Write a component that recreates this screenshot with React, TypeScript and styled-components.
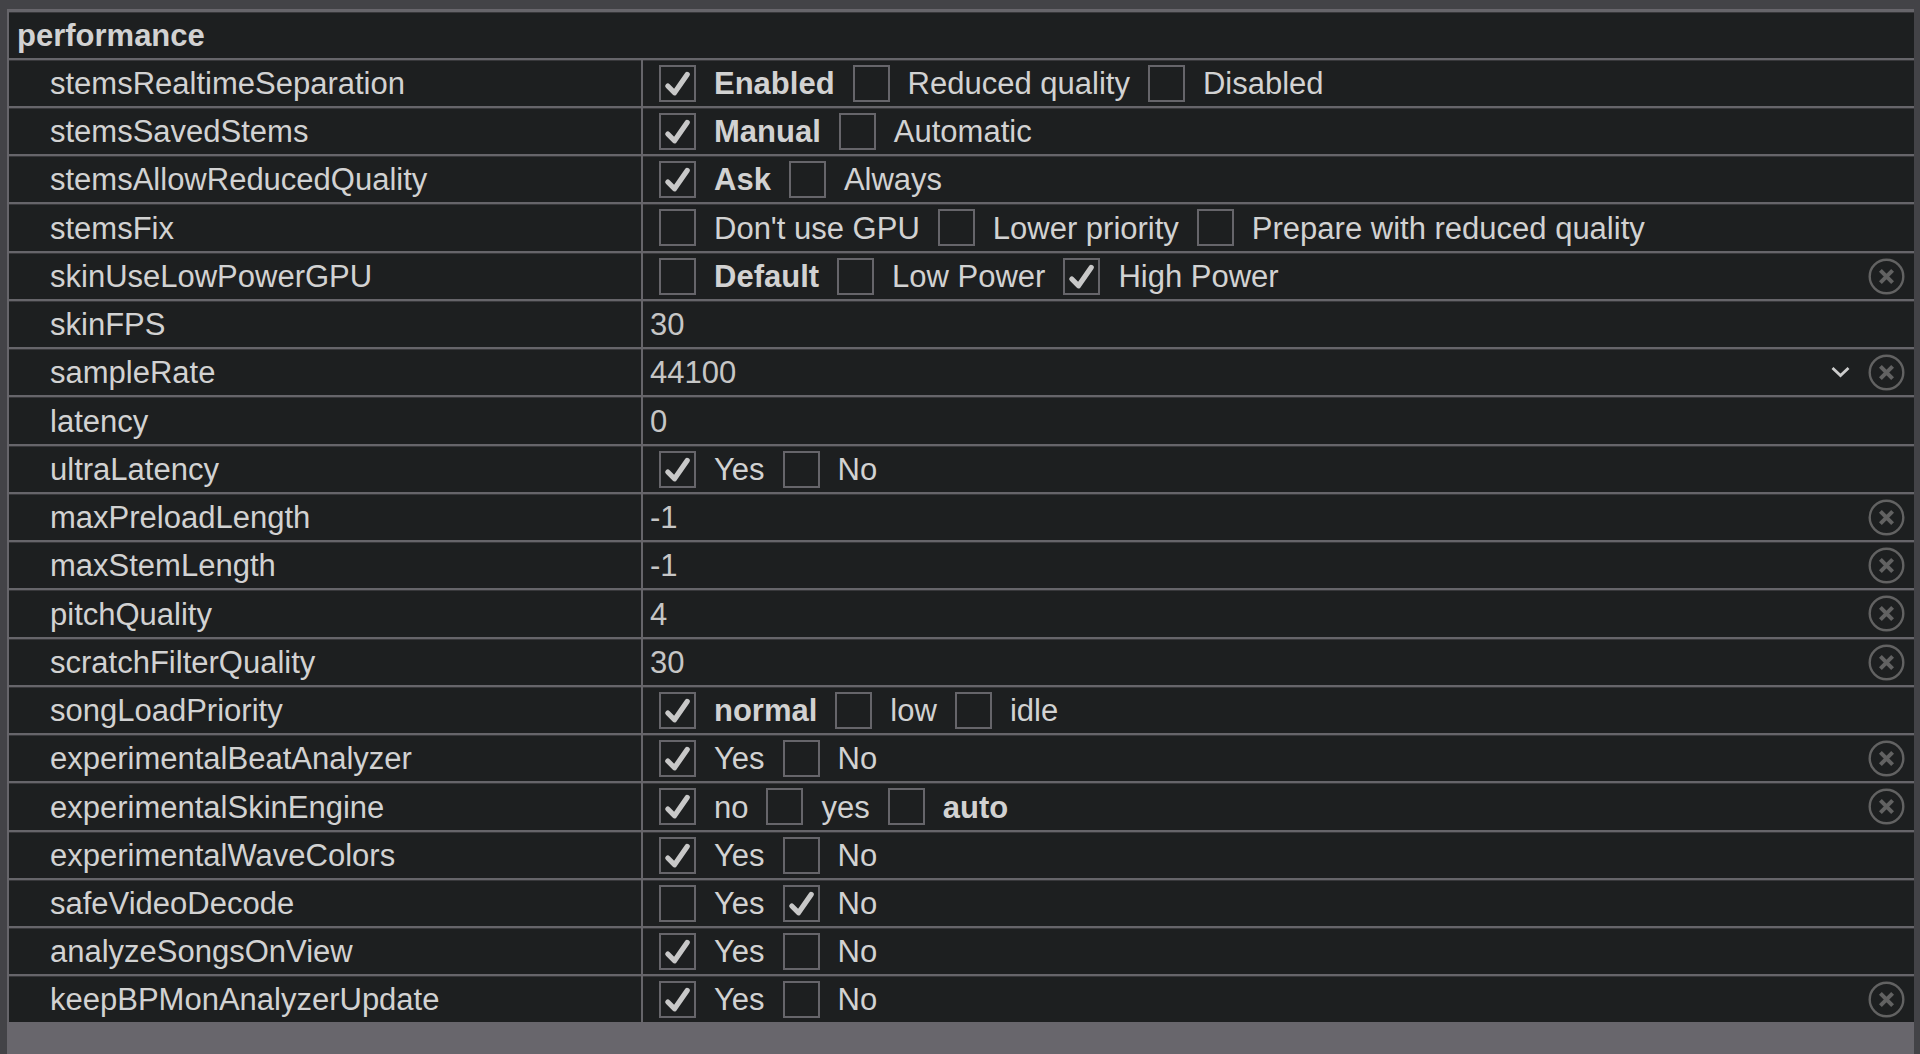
import React, { useState } from "react";
import styled, { createGlobalStyle } from "styled-components";

const colors = {
  frame: "#434347",
  line: "#66656a",
  lineShade: "#38383b",
  filler: "#68666c",
  row: "#1d1f20",
  text: "#d2d2d2",
  value: "#c6c6c6",
  reset: "#626262",
};

const GlobalStyle = createGlobalStyle`
  *, *::before, *::after { box-sizing: border-box; }
  body {
    margin: 0;
    background: ${colors.frame};
    color: ${colors.text};
    font: 31px/36px "Liberation Sans", Arial, sans-serif;
  }
`;

const Page = styled.main`
  display: flex;
  min-height: 100vh;
  padding: 9px 6px 0 7px;
`;

const Panel = styled.form`
  flex: 1;
  min-width: 0;
  padding-top: 1px;
  background: ${colors.filler};
`;

const OptionsTable = styled.table`
  width: 100%;
  table-layout: fixed;
  border-collapse: separate;
  border-spacing: 0;
`;

const NameColumn = styled.col`
  width: 634px;
`;

const Row = styled.tr`
  height: 48px;

  &:nth-child(4n + 5):not(:last-child) {
    height: 49px;
  }
`;

const Cell = styled.td`
  padding: 0;
  border-top: 2px solid ${colors.line};
  border-left: 2px solid ${colors.line};
  background: ${colors.row};
  box-shadow: inset 0 1px ${colors.lineShade};
`;

const GroupHeading = styled(Cell).attrs({ as: "th" })`
  padding: 2px 0 0 8px;
  font-weight: 700;
  text-align: left;
`;

const NameCell = styled(Cell).attrs({ as: "th" })`
  padding: 2px 0 0 41px;
  font-weight: 400;
  text-align: left;
`;

const CellContent = styled.div`
  display: flex;
  align-items: center;
  gap: 18px;
  padding-right: 9px;
`;

const Choices = styled.div`
  display: flex;
  flex: 1;
  align-items: center;
  gap: 18px;
  padding-left: 16px;
`;

const Choice = styled.label<{ $bold?: boolean }>`
  display: flex;
  align-items: center;
  gap: 18px;
  font-weight: ${(p) => (p.$bold ? 700 : 400)};
  white-space: nowrap;
`;

const ChoiceText = styled.span`
  padding-top: 2px;
`;

const Box = styled.span`
  display: grid;
  width: 37px;
  height: 37px;

  & > * {
    grid-area: 1 / 1;
  }
`;

const Tick = styled.input`
  appearance: none;
  width: 37px;
  height: 37px;
  margin: 0;
  border: 2px solid ${colors.line};

  & + svg {
    visibility: hidden;
    pointer-events: none;
  }

  &:checked + svg {
    visibility: visible;
  }
`;

const ValueInput = styled.input`
  flex: 1;
  min-width: 0;
  height: 38px;
  padding: 2px 0 0 7px;
  border: 0;
  outline: 0;
  background: transparent;
  color: ${colors.value};
  font: inherit;
`;

const SelectBox = styled.div`
  display: grid;
  flex: 1;
  align-items: center;

  & > * {
    grid-area: 1 / 1;
  }

  & > svg {
    justify-self: end;
    pointer-events: none;
  }
`;

const ValueSelect = styled.select`
  appearance: none;
  height: 38px;
  padding: 2px 0 0 7px;
  border: 0;
  outline: 0;
  background: transparent;
  color: ${colors.value};
  font: inherit;
`;

const ResetButton = styled.button`
  display: grid;
  width: 37px;
  height: 37px;
  padding: 0;
  border: 0;
  background: transparent;
  color: ${colors.reset};
  cursor: pointer;
`;

const CheckIcon = () => (
  <svg width="37" height="37" viewBox="0 0 37 37" fill="none" aria-hidden="true">
    <path d="M8.8 21L15.5 27.8L28.2 9.4" stroke="#c8c8c8" strokeWidth="5.2" strokeLinecap="round" strokeLinejoin="round" />
  </svg>
);

const ChevronIcon = () => (
  <svg width="19" height="12" viewBox="0 0 19 12" fill="none" aria-hidden="true">
    <path d="M1.5 2L9.5 9.5L17.5 2" stroke="#cccccc" strokeWidth="2.8" />
  </svg>
);

const ResetIcon = () => (
  <svg width="37" height="37" viewBox="0 0 37 37" fill="none" stroke="currentColor" aria-hidden="true">
    <circle cx="18.5" cy="18.5" r="16.8" strokeWidth="2.4" />
    <path d="M12.4 12.4L24.6 24.6M24.6 12.4L12.4 24.6" strokeWidth="4" />
  </svg>
);

type Option = {
  name: string;
  resettable?: boolean;
} & (
  | { kind: "choice"; choices: string[]; selected: number; standard?: number }
  | { kind: "flags"; choices: string[] }
  | { kind: "number"; value: string }
  | { kind: "list"; value: string; values: string[] }
);

const yesNo = (name: string, selected: number, resettable = false): Option => ({
  name,
  kind: "choice",
  choices: ["Yes", "No"],
  selected,
  resettable,
});

const options: Option[] = [
  { name: "stemsRealtimeSeparation", kind: "choice", choices: ["Enabled", "Reduced quality", "Disabled"], selected: 0, standard: 0 },
  { name: "stemsSavedStems", kind: "choice", choices: ["Manual", "Automatic"], selected: 0, standard: 0 },
  { name: "stemsAllowReducedQuality", kind: "choice", choices: ["Ask", "Always"], selected: 0, standard: 0 },
  { name: "stemsFix", kind: "flags", choices: ["Don't use GPU", "Lower priority", "Prepare with reduced quality"] },
  { name: "skinUseLowPowerGPU", kind: "choice", choices: ["Default", "Low Power", "High Power"], selected: 2, standard: 0, resettable: true },
  { name: "skinFPS", kind: "number", value: "30" },
  { name: "sampleRate", kind: "list", value: "44100", values: ["44100", "48000"], resettable: true },
  { name: "latency", kind: "number", value: "0" },
  yesNo("ultraLatency", 0),
  { name: "maxPreloadLength", kind: "number", value: "-1", resettable: true },
  { name: "maxStemLength", kind: "number", value: "-1", resettable: true },
  { name: "pitchQuality", kind: "number", value: "4", resettable: true },
  { name: "scratchFilterQuality", kind: "number", value: "30", resettable: true },
  { name: "songLoadPriority", kind: "choice", choices: ["normal", "low", "idle"], selected: 0, standard: 0 },
  yesNo("experimentalBeatAnalyzer", 0, true),
  { name: "experimentalSkinEngine", kind: "choice", choices: ["no", "yes", "auto"], selected: 0, standard: 2, resettable: true },
  yesNo("experimentalWaveColors", 0),
  yesNo("safeVideoDecode", 1),
  yesNo("analyzeSongsOnView", 0),
  yesNo("keepBPMonAnalyzerUpdate", 0, true),
];

function Editor({ option }: { option: Option }) {
  const labelId = `option-${option.name}`;
  const [value, setValue] = useState("value" in option ? option.value : "");

  if (option.kind === "number") {
    return (
      <ValueInput type="text" aria-labelledby={labelId} value={value} onChange={(e) => setValue(e.target.value)} />
    );
  }

  if (option.kind === "list") {
    return (
      <SelectBox>
        <ValueSelect aria-labelledby={labelId} value={value} onChange={(e) => setValue(e.target.value)}>
          {option.values.map((v) => (
            <option key={v}>{v}</option>
          ))}
        </ValueSelect>
        <ChevronIcon />
      </SelectBox>
    );
  }

  const exclusive = option.kind === "choice";
  return (
    <Choices role={exclusive ? "radiogroup" : "group"} aria-labelledby={labelId}>
      {option.choices.map((choice, i) => (
        <Choice key={choice} $bold={option.kind === "choice" && option.standard === i}>
          <Box>
            <Tick
              type={exclusive ? "radio" : "checkbox"}
              name={option.name}
              defaultChecked={option.kind === "choice" && option.selected === i}
            />
            <CheckIcon />
          </Box>
          <ChoiceText>{choice}</ChoiceText>
        </Choice>
      ))}
    </Choices>
  );
}

export default function App() {
  return (
    <>
      <GlobalStyle />
      <Page>
        <Panel>
          <OptionsTable>
            <colgroup>
              <NameColumn />
              <col />
            </colgroup>
            <tbody>
              <Row>
                <GroupHeading colSpan={2} scope="colgroup">
                  performance
                </GroupHeading>
              </Row>
              {options.map((option) => (
                <Row key={option.name}>
                  <NameCell scope="row" id={`option-${option.name}`}>
                    {option.name}
                  </NameCell>
                  <Cell>
                    <CellContent>
                      <Editor option={option} />
                      {option.resettable && (
                        <ResetButton type="button" aria-label={`Reset ${option.name}`}>
                          <ResetIcon />
                        </ResetButton>
                      )}
                    </CellContent>
                  </Cell>
                </Row>
              ))}
            </tbody>
          </OptionsTable>
        </Panel>
      </Page>
    </>
  );
}
